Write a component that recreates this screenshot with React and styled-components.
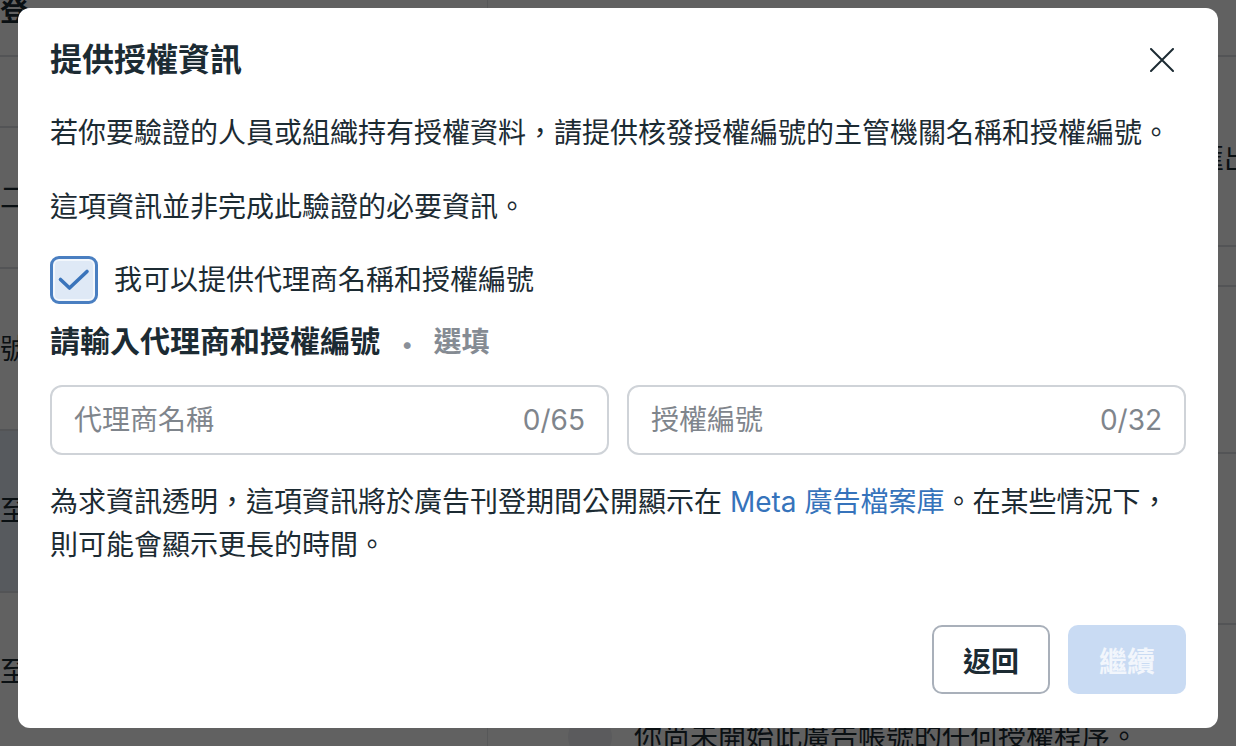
import React from 'react';
import styled, { createGlobalStyle } from 'styled-components';

const GlobalStyle = createGlobalStyle`
  html, body {
    margin: 0;
    padding: 0;
    height: 100%;
    overflow: hidden;
  }
  body {
    font-family: Inter, "Noto Sans CJK TC", sans-serif;
    color: #1c2b33;
    background: #fff;
  }
  * {
    box-sizing: border-box;
  }
`;

const leftRows = [
  { h: 57, text: '登', top: true },
  { h: 71 },
  { h: 141, text: '二' },
  { h: 162, text: '號' },
  { h: 162, text: '至', selected: true },
  { h: 160, text: '至' },
];

const App = () => {
  return (
    <>
      <GlobalStyle />
      <Page>
        <LeftCol>
          {leftRows.map((r, i) => (
            <Row key={i} $h={r.h} $selected={r.selected} $top={r.top}>
              {r.text && <RowText $bold={r.top}>{r.text}</RowText>}
            </Row>
          ))}
        </LeftCol>
        <RightCol>
          <Row $h={57} />
          <Row $h={190} $end>
            <ExportText>匯出</ExportText>
          </Row>
          <Row $h={40} />
          <Row $h={167} />
          <Row $h={171} />
          <StatusRow>
            <StatusIcon />
            <StatusText>你尚未開始此廣告帳號的任何授權程序。</StatusText>
          </StatusRow>
        </RightCol>
      </Page>

      <Overlay>
        <Dialog role="dialog" aria-modal="true">
          <Header>
            <Title>提供授權資訊</Title>
            <CloseButton aria-label="關閉">
              <svg width="24" height="24" viewBox="0 0 24 24">
                <path
                  d="M1 1 L23 23 M23 1 L1 23"
                  stroke="#1c2b33"
                  strokeWidth="2"
                  strokeLinecap="round"
                  fill="none"
                />
              </svg>
            </CloseButton>
          </Header>

          <Text $mt={33}>
            若你要驗證的人員或組織持有授權資料，請提供核發授權編號的主管機關名稱和授權編號。
          </Text>
          <Text $mt={34}>這項資訊並非完成此驗證的必要資訊。</Text>

          <CheckRow>
            <CheckBox>
              <svg width="42" height="42" viewBox="3 3 42 42">
                <path
                  d="M10.5 23.5 L19.5 32 L37 15.5"
                  stroke="#3a74bb"
                  strokeWidth="3.6"
                  strokeLinecap="round"
                  strokeLinejoin="round"
                  fill="none"
                />
              </svg>
            </CheckBox>
            <CheckLabel>我可以提供代理商名稱和授權編號</CheckLabel>
          </CheckRow>

          <SectionLabel>
            請輸入代理商和授權編號
            <Dot>•</Dot>
            <Optional>選填</Optional>
          </SectionLabel>

          <Fields>
            <Field>
              <Input placeholder="代理商名稱" />
              <Counter>0/65</Counter>
            </Field>
            <Field>
              <Input placeholder="授權編號" />
              <Counter>0/32</Counter>
            </Field>
          </Fields>

          <Note>
            為求資訊透明，這項資訊將於廣告刊登期間公開顯示在 <Link href="#">Meta 廣告檔案庫</Link>
            。在某些情況下，則可能會顯示更長的時間。
          </Note>

          <Footer>
            <Button>返回</Button>
            <Button $primary disabled>
              繼續
            </Button>
          </Footer>
        </Dialog>
      </Overlay>
    </>
  );
};

export default App;

const Page = styled.div`
  display: grid;
  grid-template-columns: 487px 1fr;
  height: 100vh;
  overflow: hidden;
`;

const LeftCol = styled.div`
  display: flex;
  flex-direction: column;
`;

const RightCol = styled.div`
  display: flex;
  flex-direction: column;
  border-left: 1px solid #e4e6eb;
`;

const Row = styled.div`
  flex: 0 0 ${p => p.$h}px;
  display: flex;
  align-items: ${p => (p.$top ? 'flex-start' : 'center')};
  justify-content: ${p => (p.$end ? 'flex-end' : 'flex-start')};
  border-bottom: 2px solid #dadde1;
  background: ${p => (p.$selected ? '#e5edf8' : '#fff')};
  overflow: hidden;
`;

const RowText = styled.span`
  font-size: 28px;
  line-height: 22px;
  font-weight: ${p => (p.$bold ? 700 : 400)};
  color: #1c2b33;
`;

const ExportText = styled.span`
  font-size: 28px;
  line-height: 40px;
  margin-right: -16px;
  margin-top: 16px;
`;

const StatusRow = styled.div`
  display: flex;
  align-items: center;
  gap: 22px;
  padding: 90px 0 0 80px;
`;

const StatusIcon = styled.div`
  width: 44px;
  height: 44px;
  border-radius: 50%;
  background: #eef0f3;
  flex-shrink: 0;
`;

const StatusText = styled.span`
  font-size: 28px;
  line-height: 40px;
  white-space: nowrap;
`;

const Overlay = styled.div`
  position: fixed;
  inset: 0;
  background: rgba(0, 0, 0, 0.62);
  display: flex;
  justify-content: center;
  align-items: flex-start;
  padding-top: 8px;
`;

const Dialog = styled.div`
  width: 1200px;
  height: 720px;
  background: #fff;
  border-radius: 12px;
  padding: 32px 32px 34px;
  display: flex;
  flex-direction: column;
`;

const Header = styled.div`
  display: flex;
  align-items: center;
  justify-content: space-between;
  height: 40px;
`;

const Title = styled.h2`
  margin: 0;
  font-size: 32px;
  line-height: 40px;
  font-weight: 700;
  color: #1c2b33;
`;

const CloseButton = styled.button`
  width: 48px;
  height: 48px;
  margin: -4px 0;
  padding: 0;
  border: none;
  background: transparent;
  display: flex;
  align-items: center;
  justify-content: center;
  cursor: pointer;
`;

const Text = styled.p`
  margin: ${p => p.$mt}px 0 0;
  font-size: 28px;
  line-height: 40px;
  color: #1c2b33;
`;

const CheckRow = styled.label`
  margin-top: 29px;
  display: flex;
  align-items: center;
  gap: 16px;
  cursor: pointer;
`;

const CheckBox = styled.span`
  width: 48px;
  height: 48px;
  border: 3px solid #4a7fc1;
  border-radius: 9px;
  background: #dfe9f6;
  box-shadow: inset 0 0 0 2px #f3f7fc;
  display: flex;
  align-items: center;
  justify-content: center;
  flex-shrink: 0;
`;

const CheckLabel = styled.span`
  font-size: 28px;
  line-height: 40px;
  color: #1c2b33;
`;

const SectionLabel = styled.div`
  margin-top: 17px;
  display: flex;
  align-items: baseline;
  font-size: 30px;
  line-height: 40px;
  font-weight: 700;
  color: #1c2b33;
`;

const Dot = styled.span`
  margin: 0 21px 0 22px;
  font-size: 22px;
  color: #8a9099;
`;

const Optional = styled.span`
  font-size: 28px;
  font-weight: 600;
  color: #858b93;
`;

const Fields = styled.div`
  margin-top: 21px;
  display: grid;
  grid-template-columns: 1fr 1fr;
  gap: 18px;
`;

const Field = styled.div`
  height: 70px;
  border: 2px solid #cfd3d8;
  border-radius: 12px;
  display: flex;
  align-items: center;
  padding: 0 22px 0 22px;
  gap: 12px;
`;

const Input = styled.input`
  flex: 1;
  min-width: 0;
  border: none;
  outline: none;
  background: transparent;
  padding: 0;
  font-family: inherit;
  font-size: 28px;
  color: #1c2b33;
  &::placeholder {
    color: #7f858c;
  }
`;

const Counter = styled.span`
  font-size: 28px;
  color: #7f858c;
`;

const Note = styled.p`
  margin: 26px 0 0;
  font-size: 28px;
  line-height: 43px;
  color: #1c2b33;
`;

const Link = styled.a`
  color: #3673bb;
  text-decoration: none;
`;

const Footer = styled.div`
  margin-top: auto;
  display: flex;
  justify-content: flex-end;
  gap: 18px;
`;

const Button = styled.button`
  width: 118px;
  height: 69px;
  border-radius: 10px;
  font-family: inherit;
  font-size: 28px;
  font-weight: 700;
  border: ${p => (p.$primary ? 'none' : '2px solid #a9b0ba')};
  background: ${p => (p.$primary ? '#c9dbf3' : '#fff')};
  color: ${p => (p.$primary ? '#f2f6fc' : '#1c2b33')};
  cursor: ${p => (p.$primary ? 'default' : 'pointer')};
`;
